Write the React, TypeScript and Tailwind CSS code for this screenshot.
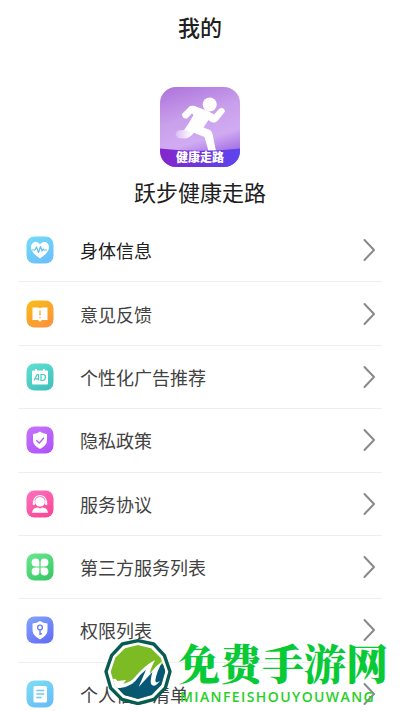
import type { ReactNode } from 'react';

type Item = { label: string; from: string; to: string; glyph: ReactNode };

const items: Item[] = [
  {
    label: '身体信息',
    from: '#74dcf8',
    to: '#6cc0fb',
    glyph: (
      <>
        <path d="M14 22.5C9 19 5 15.5 5 11.2C5 8 7.2 6 9.8 6C11.6 6 13.1 7 14 8.4C14.9 7 16.4 6 18.2 6C20.8 6 23 8 23 11.2C23 15.5 19 19 14 22.5Z" fill="#fff" />
        <path d="M6 14h3l1.5-3 2 5.500 2-6 1.500 4.500 1.200-2 .8 1H21" fill="none" stroke="#62bdf3" strokeWidth="1.200" strokeLinejoin="round" />
      </>
    ),
  },
  {
    label: '意见反馈',
    from: '#f9bd18',
    to: '#fb9638',
    glyph: (
      <>
        <path d="M6.500 7.500H12.500L14 8.200L15.500 7.500H21.500V20H16L14 21.800L12 20H6.500Z" fill="#fff" />
        <path d="M14 10.500V15.500M14 17V18.200" stroke="#fba52b" strokeWidth="1.300" />
      </>
    ),
  },
  {
    label: '个性化广告推荐',
    from: '#61dfd4',
    to: '#43c3bd',
    glyph: (
      <>
        <path d="M7 7.500H9V6H11V7.500H17V6H19V7.500H21Q22 7.500 22 8.500V20.500Q22 21.500 21 21.500H7Q6 21.500 6 20.500V8.500Q6 7.500 7 7.500Z" fill="#fff" />
        <path d="M8 17.500L11.200 11.500H12.500V17.500M9.500 15.800H12.500M15 17.500V11.500H17.300C20.500 11.500 20 17.500 16.500 17.500Z" fill="none" stroke="#49cbc1" strokeWidth="1.200" />
      </>
    ),
  },
  {
    label: '隐私政策',
    from: '#c576fa',
    to: '#b155fa',
    glyph: (
      <>
        <path d="M14 5.500Q17 7.800 21 8V14Q21 19.500 14 23Q7 19.500 7 14V8Q11 7.800 14 5.500Z" fill="#fff" />
        <path d="M10.300 14.200L13.200 17L18 11.800" fill="none" stroke="#b45bf6" strokeWidth="1.300" />
      </>
    ),
  },
  {
    label: '服务协议',
    from: '#fc73bf',
    to: '#f94a98',
    glyph: (
      <>
        <circle cx="14" cy="11.800" r="4.900" fill="#fff" />
        <path d="M7.800 14V11.800C7.800 3.500 20.200 3.500 20.200 11.800V14" fill="none" stroke="#fff" strokeWidth="1.300" />
        <path d="M7.800 11V15M20.200 11V15" stroke="#fff" strokeWidth="2" />
        <path d="M6 22.800Q6.500 17.500 11.500 17.500L14 18.500L16.500 17.500Q21.500 17.500 22 22.800Z" fill="#fff" />
      </>
    ),
  },
  {
    label: '第三方服务列表',
    from: '#6ce78f',
    to: '#3ccb68',
    glyph: (
      <g fill="#fff">
        <path d="M13.400 13.400H9.500A3.900 3.900 0 1 1 13.400 9.500Z" />
        <path d="M14.600 13.400H18.500A3.900 3.900 0 1 0 14.600 9.500Z" />
        <path d="M13.400 14.600H9.500A3.900 3.900 0 1 0 13.400 18.500Z" />
        <path d="M14.600 14.600H18.500A3.900 3.900 0 1 1 14.600 18.500Z" />
      </g>
    ),
  },
  {
    label: '权限列表',
    from: '#83a6fb',
    to: '#6671f5',
    glyph: (
      <>
        <path d="M14 5Q17 7.400 21.500 7.600V14Q21.500 19.500 14 23.500Q6.500 19.500 6.500 14V7.600Q11 7.400 14 5Z" fill="#fff" />
        <circle cx="14" cy="11.500" r="2.400" fill="none" stroke="#6f82f5" strokeWidth="1.400" />
        <path d="M14 14V19M14 17.800H16" stroke="#6f82f5" strokeWidth="1.400" />
      </>
    ),
  },
  {
    label: '个人信息清单',
    from: '#80dff3',
    to: '#68bff8',
    glyph: (
      <>
        <rect x="7.500" y="6" width="13.500" height="16.500" rx="1.500" fill="#fff" />
        <path d="M10.300 10.500H18.200M10.300 14H18.200M10.300 17.500H15.500" stroke="#6fcbf3" strokeWidth="1.500" />
      </>
    ),
  },
];

function ItemIcon({ item, id }: { item: Item; id: string }) {
  return (
    <svg className="size-7 shrink-0" viewBox="0 0 28 28" aria-hidden="true">
      <defs>
        <linearGradient id={id} x1="0" y1="0" x2="0.6" y2="1">
          <stop offset="0" stopColor={item.from} />
          <stop offset="1" stopColor={item.to} />
        </linearGradient>
      </defs>
      <rect x="0.500" y="0.500" width="27" height="27" rx="8" fill={`url(#${id})`} />
      {item.glyph}
    </svg>
  );
}

function AppLogo() {
  return (
    <div className="relative size-20 overflow-hidden rounded-2xl">
      <svg className="size-full" viewBox="0 0 80 80" aria-hidden="true">
        <defs>
          <linearGradient id="logo-bg" x1="0" y1="0" x2="0.3" y2="1">
            <stop offset="0" stopColor="#ad72dc" />
            <stop offset="0.45" stopColor="#c9a0eb" />
            <stop offset="0.75" stopColor="#d0abf2" />
            <stop offset="1" stopColor="#a26be3" />
          </linearGradient>
          <linearGradient id="logo-band" x1="0" y1="0" x2="1" y2="0">
            <stop offset="0" stopColor="#8426cb" />
            <stop offset="1" stopColor="#5b45ee" />
          </linearGradient>
          <linearGradient id="logo-leg" gradientUnits="userSpaceOnUse" x1="14" y1="0" x2="32" y2="0">
            <stop offset="0" stopColor="#fff" stopOpacity="0.2" />
            <stop offset="1" stopColor="#fff" />
          </linearGradient>
        </defs>
        <rect width="80" height="80" fill="url(#logo-bg)" />
        <circle cx="49.700" cy="17.500" r="7" fill="#fff" />
        <path d="M30 19Q34 18 37 20L48 24L54 27.500L59.500 21.500Q64 19.500 65 24.500L57.500 34Q54 37 50.500 34.500L48.500 33L43.500 40.500L50 43Q52 44.500 52.500 47L56 64H48.500L44.500 50L32 45L24.500 43Q29 36 33.500 28L32 26.500L27 31.500Q22 32 22 27Z" fill="#fff" />
        <path d="M34 45.500Q30 51.500 24 51.500L18 51Q13 47 18 43.500L24 43L27 38.500Z" fill="url(#logo-leg)" />
        <path d="M0 61.500Q40 66 80 61.500V80H0Z" fill="url(#logo-band)" />
      </svg>
      <span className="absolute inset-x-0 bottom-1 text-center text-xs leading-3 font-black text-white">健康走路</span>
    </div>
  );
}

function Chevron() {
  return (
    <svg className="h-6 w-4 shrink-0" viewBox="0 0 16 24" fill="none" stroke="#8a8a8a" strokeWidth="2" aria-hidden="true">
      <path d="M4.500 2L14 12L4.500 22" strokeLinecap="round" strokeLinejoin="round" />
    </svg>
  );
}

function SiteMark() {
  return (
    <div className="pointer-events-none absolute right-3 bottom-1 flex items-start gap-1.5">
      <svg className="mt-0.5 h-[66px] w-[68px]" viewBox="0 0 204 198" aria-hidden="true">
        <defs>
          <clipPath id="mark-clip">
            <path d="M102 18L141 28L170 56L184 96L172 138L143 168L102 180L61 168L32 138L20 98L34 56L63 28Z" />
          </clipPath>
        </defs>
        <path d="M102 5L149 15L181 49L198 98L184 147L150 181L102 194L54 181L20 147L6 98L23 49L55 15Z" fill="#fff" stroke="#075b50" strokeWidth="10" strokeLinejoin="round" />
        <g clipPath="url(#mark-clip)">
          <rect width="204" height="198" fill="#7dbb25" />
          <path d="M20 150Q58 145 88 119Q116 88 148 67L130 112Q151 85 190 68V198H20Z" fill="#075875" />
          <path d="M20 121L34 119L41 126L66 123L58 134Q79 132 98 108Q123 79 153 63Q140 88 137 104Q154 82 176 65Q157 101 154 124Q154 136 168 125Q151 149 141 135Q138 126 145 99L104 144L126 92Q109 105 94 126Q75 149 20 148Z" fill="#fff" />
          <path d="M20 153Q66 153 91 137Q79 156 108 160Q90 176 48 171Z" fill="#07586b" />
        </g>
      </svg>
      <div className="flex flex-col">
        <strong className="font-['Noto_Serif_CJK_SC','Noto_Sans_CJK_SC',serif] text-[42px] leading-[50px] font-black whitespace-nowrap text-[#08c936]">免费手游网</strong>
        <span className="pl-0.5 font-['Open_Sans',sans-serif] text-sm leading-5 font-semibold tracking-widest text-[#27cf27]">MIANFEISHOUYOUWANG</span>
      </div>
    </div>
  );
}

export default function App() {
  return (
    <div className="relative h-screen overflow-hidden bg-white font-['Noto_Sans_CJK_SC',sans-serif] text-[#202020]">
      <header className="flex h-[52px] items-center justify-center">
        <h1 className="text-[22px] leading-8 font-medium">我的</h1>
      </header>
      <main>
        <section className="flex flex-col items-center gap-2 pt-[35px] pb-3">
          <AppLogo />
          <h2 className="text-[22px] leading-8">跃步健康走路</h2>
        </section>
        <ul className="grid h-[507px] auto-rows-fr px-[18px]">
          {items.map((item, index) => (
            <li key={item.label} className="border-b border-[#eeeeee]">
              <button type="button" className="group flex size-full items-center pr-1.5 pl-2 text-left">
                <ItemIcon item={item} id={`item-${index}`} />
                <span className={`ml-[26px] flex-1 text-lg ${index === 0 ? 'text-[#202020]' : 'text-[#424242]'}`}>{item.label}</span>
                <Chevron />
              </button>
            </li>
          ))}
        </ul>
      </main>
      <SiteMark />
    </div>
  );
}
